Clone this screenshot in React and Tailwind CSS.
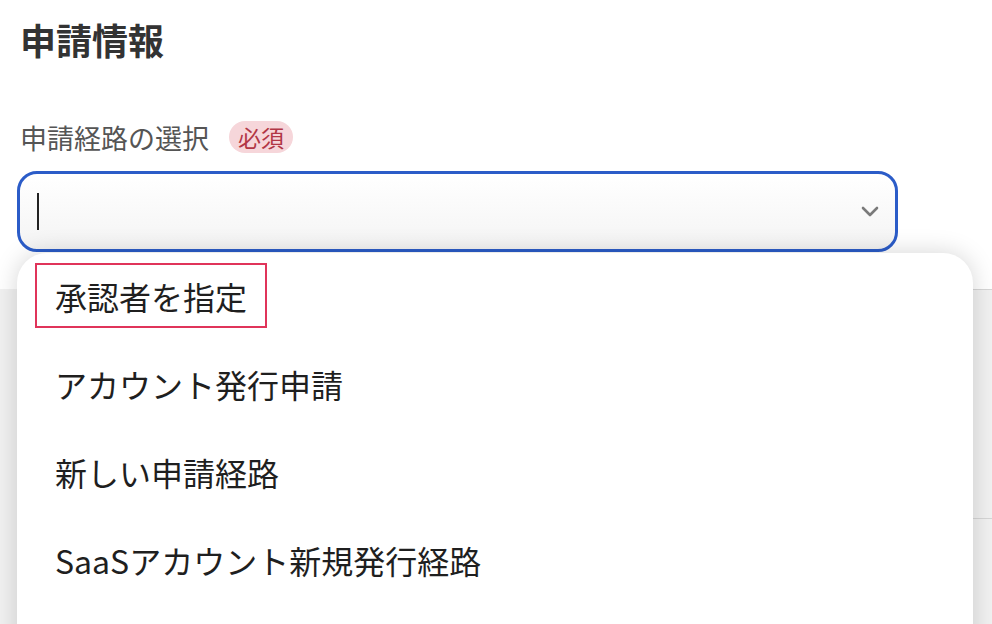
import React from 'react';

const ROUTES = ['承認者を指定', 'アカウント発行申請', '新しい申請経路', 'SaaSアカウント新規発行経路'];

function Chevron() {
    return (
        <svg width="18" height="11" viewBox="0 0 18 11" fill="none">
            <path d="M2 2l7 7 7-7" stroke="#7a7a7a" strokeWidth="2.6" strokeLinecap="round" strokeLinejoin="round" />
        </svg>
    );
}

export default function App() {
    return (
        <div className="relative h-[624px] overflow-hidden bg-white font-['Noto_Sans_CJK_JP','Noto_Sans',sans-serif]">
            <div className="px-[20px] pt-[21px]">
                <h2 className="text-[36px] font-bold leading-none text-[#333]">申請情報</h2>

                <div className="mt-[64px] flex h-[32px] items-center gap-[20px]">
                    <span className="text-[27px] leading-none text-[#555]">申請経路の選択</span>
                    <span className="flex h-[32px] items-center rounded-full bg-[#f6d6da] px-[9px] text-[23px] leading-none text-[#b23646]">必須</span>
                </div>

                {/* select + open menu */}
                <div className="relative z-10 ml-[-3px] mt-[18px] w-[881px]">
                    <div className="flex h-[81px] items-center justify-between rounded-[20px] border-[3px] border-[#2b5cc8] bg-gradient-to-b from-white to-[#f4f4f4] pl-[17px] pr-[16px]">
                        <div className="h-[37px] w-[2px] bg-[#222]" />
                        <Chevron />
                    </div>

                    <div className="absolute left-0 top-full mt-[1px] h-[420px] w-[956px] rounded-t-[30px] bg-white shadow-[0_0_24px_rgba(0,0,0,0.17)]">
                        <ul className="flex flex-col gap-[23px] pl-[18px] pt-[10px]">
                            {ROUTES.map((r, i) => (
                                <li key={r}>
                                    <div className={`inline-flex h-[65px] items-center border-2 px-[18px] text-[32px] leading-none text-[#1f1f1f] ${i === 0 ? 'border-[#e0345a]' : 'border-transparent'}`}>
                                        {r}
                                    </div>
                                </li>
                            ))}
                        </ul>
                    </div>
                </div>
            </div>

            {/* page content underneath the menu */}
            <div className="mt-[37px] bg-[#f1f1f1] pl-[40px]">
                <div className="h-[229px] border-t border-[#d6d6d6]" />
                <div className="h-[200px] border-t border-[#d6d6d6]" />
            </div>
        </div>
    );
}
